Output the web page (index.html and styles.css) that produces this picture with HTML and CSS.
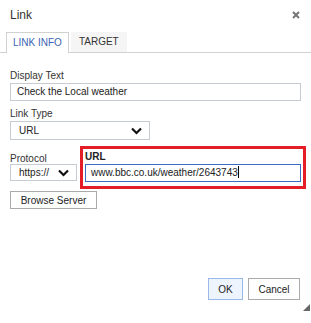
FILE: index.html
```html
<!DOCTYPE html>
<html lang="en">
<head>
  <meta charset="UTF-8" />
  <title>Link</title>
  <link rel="stylesheet" href="styles.css">
</head>
<body>
  <div class="dialog">
    <div class="title-bar">
      <span class="title">Link</span>
      <svg class="close" width="8" height="8" viewBox="0 0 8 8"><path d="M1 1 L7 7 M7 1 L1 7" stroke="#777" stroke-width="2"/></svg>
    </div>

    <div class="tabs">
      <div class="tab active">LINK INFO</div>
      <div class="tab">TARGET</div>
    </div>

    <div class="content">
      <label class="label first">Display Text</label>
      <div class="field wide">Check the Local weather</div>

      <label class="label">Link Type</label>
      <div class="select type">
        <span>URL</span>
        <svg width="11" height="8" viewBox="0 0 11 8"><path d="M1 1.5 L5.5 6 L10 1.5" fill="none" stroke="#111" stroke-width="2.2"/></svg>
      </div>

      <div class="url-row">
        <div class="protocol">
          <label class="label">Protocol</label>
          <div class="select proto">
            <span>https://</span>
            <svg width="11" height="8" viewBox="0 0 11 8"><path d="M1 1.5 L5.5 6 L10 1.5" fill="none" stroke="#111" stroke-width="2.2"/></svg>
          </div>
        </div>
        <div class="highlight">
          <label class="label bold">URL</label>
          <div class="field focused">www.bbc.co.uk/weather/2643743<span class="caret"></span></div>
        </div>
      </div>

      <button class="btn browse">Browse Server</button>
    </div>

    <div class="footer">
      <button class="btn ok">OK</button>
      <button class="btn">Cancel</button>
    </div>
    <div class="resize"></div>
  </div>
</body>
</html>
```

FILE: styles.css
```css
body {
  margin: 0;
  background: #fff;
  font-family: "Liberation Sans", Arial, sans-serif;
  font-size: 10px;
  color: #222;
}
.dialog {
  position: relative;
  width: 311px;
  height: 323px;
  display: flex;
  flex-direction: column;
}
.title-bar {
  height: 32px;
  display: flex;
  justify-content: space-between;
  padding: 0 10px;
  box-sizing: border-box;
}
.title {
  font-size: 12px;
  color: #333;
  margin-top: 8px;
}
.close {
  margin-top: 11px;
  margin-right: 1px;
}
.tabs {
  display: flex;
  height: 20px;
  padding-left: 6px;
  border-bottom: 1px solid #d1d1d1;
}
.tab {
  height: 20px;
  line-height: 20px;
  padding: 0 8px;
  margin-right: 2px;
  background: #f5f5f5;
  color: #333;
  box-sizing: border-box;
}
.tab.active {
  height: 21px;
  background: #fff;
  color: #3a64b3;
  border: 1px solid #d1d1d1;
  border-bottom: none;
  padding: 0 6px;
  line-height: 19px;
}
.content {
  padding: 0 10px;
  display: flex;
  flex-direction: column;
  align-items: flex-start;
}
.label {
  display: block;
  line-height: 14px;
  height: 14px;
  color: #333;
  margin-top: 6px;
}
.label.first {
  margin-top: 16px;
}
.label.bold {
  font-weight: bold;
  margin-top: 1px;
  color: #222;
}
.field {
  height: 18px;
  line-height: 16px;
  border: 1px solid #c6ccd2;
  padding: 0 6px;
  box-sizing: border-box;
  color: #222;
  white-space: nowrap;
}
.wide {
  width: 291px;
}
.field.focused {
  width: 216px;
  border-color: #3b6ec2;
  padding-left: 5px;
}
.caret {
  display: inline-block;
  width: 1px;
  height: 12px;
  background: #000;
  vertical-align: -2px;
}
.select {
  display: flex;
  align-items: center;
  justify-content: space-between;
  border: 1px solid #c6ccd2;
  box-sizing: border-box;
  padding: 0 7px 0 8px;
  color: #222;
}
.select.type {
  width: 140px;
  height: 19px;
}
.select.proto {
  width: 67px;
  height: 17px;
}
.url-row {
  display: flex;
  align-items: flex-start;
  margin-top: 6px;
}
.protocol {
  padding-top: 6px;
  margin-right: 3px;
}
.protocol .label {
  margin-top: 0;
  height: 12px;
}
.highlight {
  border: 3px solid #e41e26;
  padding: 0 2px 4px;
}
.btn {
  font-family: "Liberation Sans", Arial, sans-serif;
  font-size: 10px;
  color: #222;
  background: #fff;
  border: 1px solid #aaa;
  margin: 0;
  padding: 0;
}
.browse {
  width: 87px;
  height: 18px;
  margin-top: 2px;
}
.footer {
  margin-top: auto;
  display: flex;
  justify-content: flex-end;
  gap: 5px;
  padding: 0 11px 23px 0;
}
.footer .btn {
  height: 22px;
  width: 52px;
}
.footer .ok {
  width: 35px;
  background: #eef4fd;
  border-color: #9ab8e8;
}
.resize {
  position: absolute;
  right: 1px;
  bottom: 12px;
  width: 0;
  height: 0;
  border-left: 7px solid transparent;
  border-bottom: 7px solid #666;
}
```
